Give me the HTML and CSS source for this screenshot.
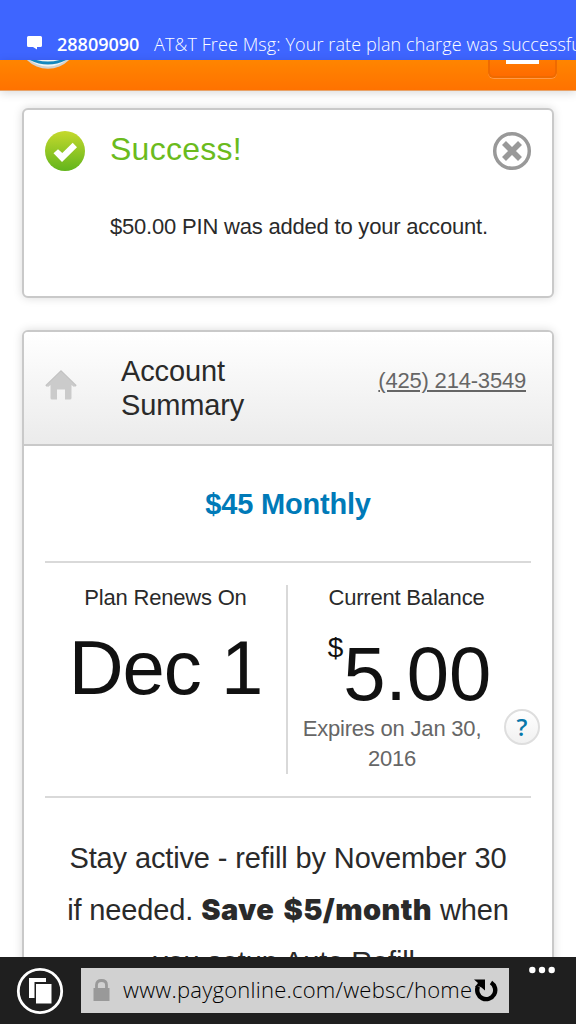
FILE: index.html
```html
<!DOCTYPE html>
<html lang="en">
  <head>
    <meta charset="utf-8">
    <title>Account Summary</title>
    <link rel="stylesheet" href="styles.css">
  </head>
  <body>

    <!-- Message notification -->
    <div class="toast">
      <svg class="toast-icon" width="16" height="14" viewBox="0 0 16 14"><path d="M1.500 0h12q1.500 0 1.500 1.500v8q0 1.500-1.500 1.500H10v2.500L6 11H1.500q-1.500 0-1.500-1.500V1.500Q0 0 1.500 0z" fill="#fff"/></svg>
      <strong class="toast-from">28809090</strong>
      <span class="toast-text">AT&amp;T Free Msg: Your rate plan charge was successful</span>
    </div>

    <!-- Site header, mostly scrolled away -->
    <header class="site-header">
      <svg class="logo" width="44" height="10" viewBox="0 0 44 10">
        <circle cx="22" cy="-21" r="29.800" fill="#d2d2d0"/>
        <circle cx="22" cy="-22.500" r="29" fill="#f4f4f0"/>
        <path d="M0-2Q22 11 44-2L42-3Q22 6 2-3z" fill="#1688bd"/>
      </svg>
      <div class="menu-button"><span class="menu-line"></span></div>
    </header>

    <main class="page">
      <section class="card alert">
        <svg class="alert-icon" width="40" height="40" viewBox="0 0 40 40">
          <defs>
            <linearGradient id="green" x1="0" y1="0" x2="0" y2="1">
              <stop offset="0" stop-color="#c5d92d"/>
              <stop offset="1" stop-color="#62b51c"/>
            </linearGradient>
          </defs>
          <circle cx="20" cy="20" r="20" fill="url(#green)"/>
          <path d="M8.500 22.300L13 18.200L17.300 22.100L27.700 11.800L32 16.200L17 31z" fill="#fff"/>
        </svg>
        <div class="alert-body">
          <h2 class="alert-title">Success!</h2>
          <p class="alert-text">$50.00 PIN was added to your account.</p>
        </div>
        <svg class="alert-close" width="40" height="40" viewBox="0 0 40 40" fill="none" stroke="#999">
          <circle cx="20" cy="20" r="17.300" stroke-width="3.500"/>
          <path d="M12 12L28 28M28 12L12 28" stroke-width="5.600"/>
        </svg>
      </section>

      <section class="card summary">
        <div class="summary-head">
          <svg class="home-icon" width="32" height="30" viewBox="0 0 32 30">
            <path d="M1 16L16 1.500L31 16" fill="none" stroke="#c2c2c2" stroke-width="2"/>
            <path d="M16 1.500L30.500 15.500L29 17L26.500 15V28q0 1.500-1.500 1.500h-5V19.500H12v10H7Q5.500 29.500 5.500 28V15L3 17L1.500 15.500z" fill="#cbcbcb"/>
          </svg>
          <h2 class="summary-title">Account Summary</h2>
          <a class="phone">(425) 214-3549</a>
        </div>

        <div class="summary-body">
          <h3 class="plan">$45 Monthly</h3>

          <div class="stats">
            <div class="stat renew">
              <p class="stat-label">Plan Renews On</p>
              <p class="stat-value">Dec 1</p>
            </div>
            <div class="stat balance">
              <p class="stat-label">Current Balance</p>
              <p class="stat-value amount"><span class="dollar">$</span><span>5.00</span></p>
              <div class="expires">
                <p class="expires-text">Expires on Jan 30, 2016</p>
                <span class="help">?</span>
              </div>
            </div>
          </div>

          <div class="note">
            <p class="note-line">Stay active - refill by November 30</p>
            <p class="note-line">if needed. <strong>Save $5/month</strong> when</p>
            <p class="note-line">you setup Auto Refill.</p>
          </div>
        </div>
      </section>
    </main>

    <!-- Browser bar -->
    <footer class="browser-bar">
      <svg class="tabs-icon" width="48" height="48" viewBox="0 0 48 48">
        <circle cx="24" cy="24" r="21.700" fill="none" stroke="#fff" stroke-width="2.800"/>
        <path d="M13 11H30V15H18.500V31H13z" fill="#fff"/>
        <path d="M20 17H35.500V36.500H20z" fill="#fff"/>
      </svg>
      <div class="address">
        <svg class="lock-icon" width="17" height="22" viewBox="0 0 17 22">
          <path d="M3.500 10V6Q3.500 1.500 8.500 1.500T13.500 6V10" fill="none" stroke="#999" stroke-width="2.800"/>
          <path d="M.5 9H16.500V22H.5z" fill="#999"/>
        </svg>
        <span class="url">www.paygonline.com/websc/home</span>
        <svg class="reload-icon" width="24" height="23" viewBox="0 0 24 23">
          <path d="M17 3.500A9 9 0 1 1 4 7.500" fill="none" stroke="#000" stroke-width="4.400"/>
          <path d="M0 .5H11V11.500L7.500 8.500L5.500 7.500L1 8L4 4z" fill="#000"/>
        </svg>
      </div>
      <svg class="more-icon" width="26" height="8" viewBox="0 0 26 8" fill="#fff">
        <circle cx="3.300" cy="4" r="3.200"/><circle cx="13" cy="4" r="3.200"/><circle cx="22.700" cy="4" r="3.200"/>
      </svg>
    </footer>

  </body>
</html>
```

FILE: styles.css
```css
* {
  box-sizing: border-box;
}

body {
  display: flex;
  flex-direction: column;
  width: 576px;
  height: 1024px;
  margin: 0;
  overflow: hidden;
  background: #fff;
  color: #2a2a2a;
  font-family: "Liberation Sans", Arial, sans-serif;
}

h2, h3, p {
  margin: 0;
  font-weight: normal;
}

svg {
  display: block;
  flex-shrink: 0;
}

/* notification */
.toast {
  display: flex;
  flex: 0 0 60px;
  align-items: flex-start;
  padding: 32px 0 0 27px;
  overflow: hidden;
  background: #3e65ff;
  color: #fff;
  font-family: "Open Sans", "Noto Sans", sans-serif;
  font-size: 18px;
  line-height: 25px;
  white-space: nowrap;
}

.toast-icon {
  margin-top: 4px;
}

.toast-from {
  width: 97px;
  margin-left: 14px;
  flex-shrink: 0;
  font-weight: 600;
}

.toast-text {
  font-weight: 330;
  letter-spacing: .1px;
}

/* orange header */
.site-header {
  display: flex;
  flex: 0 0 31px;
  justify-content: space-between;
  align-items: flex-start;
  padding: 0 19px 0 26px;
  background: linear-gradient(#ff8500, #ff7200);
  border-bottom: 1px solid #e8a268;
  box-shadow: 0 2px 9px rgba(0, 0, 0, .15);
}

.menu-button {
  width: 69px;
  height: 18px;
  padding-left: 16px;
  border: 2px solid #ef6a00;
  border-top: 0;
  border-radius: 0 0 6px 6px;
  background: linear-gradient(#ff7b00, #ff6b00);
  box-shadow: 0 1px 0 #ff9a48;
}

.menu-line {
  display: block;
  width: 33px;
  height: 4px;
  background: #fff;
}

/* cards */
.page {
  display: flex;
  flex: 0 0 866px;
  flex-direction: column;
  gap: 32px;
  padding: 17px 22px 0;
  overflow: hidden;
}

.card {
  border: 2px solid #c9c9c9;
  border-radius: 6px;
  background: #fff;
  box-shadow: 0 0 10px rgba(0, 0, 0, .15);
}

.alert {
  display: flex;
  flex: 0 0 190px;
  padding: 21px 21px 0 21px;
}

.alert-body {
  flex: 1;
  padding-left: 25px;
  white-space: nowrap;
}

.alert-title {
  color: #6bbb1d;
  font-size: 32px;
  letter-spacing: .25px;
  line-height: 37px;
}

.alert-text {
  margin-top: 46px;
  font-size: 22px;
  letter-spacing: -.2px;
  line-height: 26px;
}

.alert-close {
  margin-right: -.5px;
}

.summary {
  flex: 0 0 720px;
}

.summary-head {
  display: flex;
  height: 114px;
  padding: 22px 26px 0 21px;
  border-bottom: 2px solid #c9c9c9;
  border-radius: 4px 4px 0 0;
  background: linear-gradient(#fff, #ebebeb);
}

.home-icon {
  margin-top: 16px;
}

.summary-title {
  width: 150px;
  margin-left: 44px;
  font-size: 29px;
  letter-spacing: -.12px;
  line-height: 34px;
}

.phone {
  margin: 14px 0 0 auto;
  color: #666;
  font-size: 22px;
  letter-spacing: -.2px;
  line-height: 26px;
  text-decoration: underline;
}

.summary-body {
  padding: 0 21px;
}

.plan {
  height: 115px;
  padding-top: 41px;
  color: #007ab8;
  font-size: 29px;
  font-weight: bold;
  letter-spacing: -.2px;
  line-height: 34px;
  text-align: center;
}

.stats {
  display: flex;
  height: 237px;
  padding: 22px 0;
  border-top: 2px solid #d9d9d9;
  border-bottom: 2px solid #d9d9d9;
}

.stat {
  width: 243px;
  text-align: center;
  white-space: nowrap;
}

.renew {
  border-right: 2px solid #d9d9d9;
}

.stat-label {
  font-size: 22px;
  letter-spacing: -.2px;
  line-height: 26px;
}

.balance .stat-label {
  margin-left: -6px;
}

.stat-value {
  margin-top: 15px;
  color: #111;
  font-size: 76px;
  line-height: 84px;
}

.renew .stat-value {
  letter-spacing: -1px;
}

.amount {
  display: flex;
  justify-content: center;
  align-items: flex-start;
  height: 84px;
  margin-top: 21px;
}

.dollar {
  margin-top: -1px;
  font-size: 28px;
  line-height: 34px;
}

.expires {
  display: flex;
  width: 255px;
  margin-top: -2px;
}

.expires-text {
  width: 208px;
  color: #666;
  font-size: 22px;
  letter-spacing: -.2px;
  line-height: 30px;
  white-space: normal;
}

.help {
  width: 36px;
  height: 36px;
  margin: -5px 0 0 8px;
  border: 2px solid #dedede;
  border-radius: 50%;
  background: linear-gradient(#fff, #f1f1f1);
  color: #0877aa;
  font: 600 24px/32px "Open Sans", sans-serif;
  text-align: center;
}

.note {
  padding-top: 34px;
  font-size: 29px;
  letter-spacing: -.13px;
  line-height: 52px;
  text-align: center;
  white-space: nowrap;
}

.note strong {
  font-family: Inter, "Liberation Sans", sans-serif;
  font-size: 29px;
  font-weight: 900;
  letter-spacing: .4px;
  line-height: 1;
  word-spacing: 3px;
}

/* browser bar */
.browser-bar {
  display: flex;
  flex: 0 0 67px;
  padding: 0 20px 0 16px;
  background: #1f1f1f;
}

.tabs-icon {
  margin-top: 10px;
}

.address {
  display: flex;
  width: 428px;
  height: 45px;
  margin: 11px 0 0 17px;
  padding-left: 12px;
  background: #d1d1d1;
}

.lock-icon {
  margin-top: 11px;
}

.url {
  width: 349px;
  margin-left: 13px;
  overflow: hidden;
  color: #000;
  font-family: "Open Sans", "Noto Sans", sans-serif;
  font-size: 22px;
  font-weight: 350;
  letter-spacing: .24px;
  line-height: 43px;
  white-space: nowrap;
}

.reload-icon {
  margin: 11px 0 0 2px;
}

.more-icon {
  margin: 9px 0 0 20px;
}
```
